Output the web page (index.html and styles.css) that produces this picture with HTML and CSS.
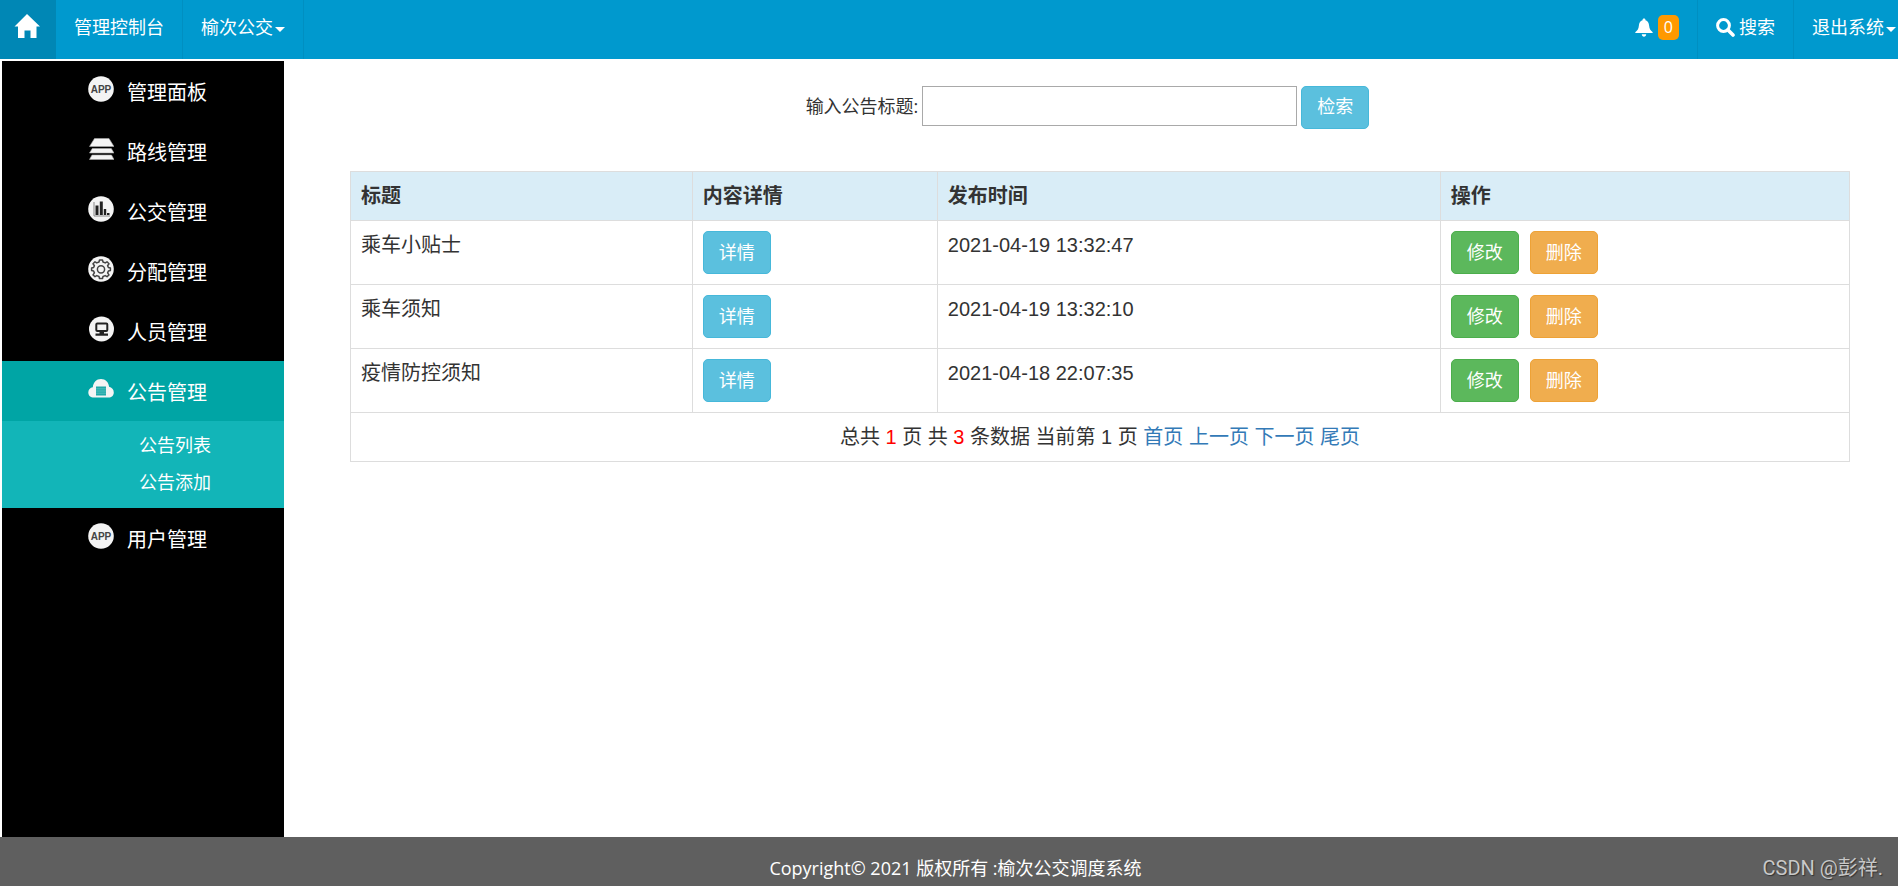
FILE: index.html
```html
<!DOCTYPE html>
<html lang="zh-CN">
<head>
<meta charset="utf-8">
<title>榆次公交调度系统</title>
<link rel="stylesheet" href="styles.css">
</head>
<body>
<header class="navbar">
  <nav class="nav-group">
    <a class="nav-home" href="#" aria-label="首页">
      <svg width="26" height="26" viewBox="0 0 26 26"><path fill="#fff" d="M13 1 26 13.600H22.500V25H16.500V17.500H10.500V25H4V13.600H0.500L13 1Z"/></svg>
    </a>
    <a class="nav-item nav-line" href="#">管理控制台</a>
    <a class="nav-item nav-line" href="#">榆次公交<span class="caret"></span></a>
  </nav>
  <nav class="nav-group">
    <a class="nav-item nav-line nav-bell" href="#" aria-label="通知">
      <svg width="18" height="20" viewBox="0 0 18 20"><path fill="#fff" d="M9 0.500c1 0 1.500.7 1.500 1.700 2.400.8 3.400 2.800 3.600 5.300.3 3.400 1.400 5 3.400 6.500.4.300.3 1-.3 1H.8c-.6 0-.7-.7-.3-1C2.500 12.500 3.600 10.900 3.900 7.500 4.100 5 5.100 3 7.500 2.200 7.500 1.200 8 .5 9 .5ZM6.800 16.300h4.400c0 1.500-1 2.500-2.200 2.500s-2.200-1-2.200-2.500Z"/></svg>
      <span class="badge">0</span>
    </a>
    <a class="nav-item nav-line" href="#">
      <svg class="search-icon" width="19" height="19" viewBox="0 0 19 19"><circle cx="7.500" cy="7.500" r="5.900" fill="none" stroke="#fff" stroke-width="3"/><path d="m12 12 5 5" stroke="#fff" stroke-width="3.600" stroke-linecap="round"/></svg>搜索</a>
    <a class="nav-item nav-last" href="#">退出系统<span class="caret"></span></a>
  </nav>
</header>

<div class="body">
  <aside class="sidebar">
    <a class="menu-item" href="#">
      <svg class="menu-icon" viewBox="0 0 26 26"><circle cx="13" cy="13" r="12.800" fill="#f4f4f4"/><text class="app-text" x="13" y="17" text-anchor="middle">APP</text></svg>
      管理面板</a>
    <a class="menu-item" href="#">
      <svg class="menu-icon" viewBox="0 0 26 26"><g fill="#f4f4f4" stroke="#aaa" stroke-width=".6"><path d="M6.500 2.500h14.500l5 8H1.500Z"/><path d="M4.300 12.500h19l2.700 4.500H1.500Z"/><path d="M4 19h19.500l2.500 4.500H1.500Z"/></g></svg>
      路线管理</a>
    <a class="menu-item" href="#">
      <svg class="menu-icon" viewBox="0 0 26 26"><circle cx="13" cy="13" r="12.800" fill="#f4f4f4"/><path d="M6 6v14h16" fill="none" stroke="#888" stroke-width="1"/><path fill="#222" d="M7.500 9.500h3V19h-3zM11.800 5.500h3V19h-3zM15.800 13h2.400v6h-2.400zM19 17h2.500v2H19z"/></svg>
      公交管理</a>
    <a class="menu-item" href="#">
      <svg class="menu-icon" viewBox="0 0 26 26"><circle cx="13" cy="13" r="12.800" fill="#f4f4f4"/><path fill="none" stroke="#444" stroke-width="1.500" stroke-linejoin="round" d="M11 6 11.500 4h3L15 6l2.200.9L19 5.800 21 7.700 19.600 9.700l.8 1.800 2 .5v2.600l-2 .5-.8 1.800 1.400 2L19 20.700l-1.800-1.100-2.200.9-.5 2h-3l-.5-2-2.200-.9L7 20.700 5 18.900l1.400-2-.8-1.800-2-.5V12l2-.5.800-1.800L5 7.700 7 5.800l1.800 1.100Z"/><circle cx="13" cy="13.300" r="3.600" fill="none" stroke="#444" stroke-width="1.500"/></svg>
      分配管理</a>
    <a class="menu-item" href="#">
      <svg class="menu-icon" viewBox="0 0 26 26"><circle cx="13.500" cy="13" r="12.500" fill="#f4f4f4"/><rect x="8.300" y="7.500" width="11" height="7.500" rx="1" fill="none" stroke="#222" stroke-width="2"/><path fill="#222" d="M11.500 15.500h4.500v2h4v2.200H7.500v-2.200h4z"/></svg>
      人员管理</a>
    <a class="menu-item active" href="#">
      <svg class="menu-icon" viewBox="0 0 26 26"><path fill="#f4f4f4" d="M6 21.500C2.500 21.500.3 19.300.3 16.400c0-2.700 1.900-4.700 4.500-5.100C5.200 6.500 8.500 3 13 3s7.600 3.200 8.100 7.800c2.700.4 4.700 2.800 4.700 5.600 0 2.900-2.300 5.100-5.300 5.100Z"/><path fill="#1fa9a9" d="M8 10.500h10v9H8z"/><path stroke="#69c6c6" stroke-width=".7" d="M8 12.800h10M8 15h10M8 17.200h10"/></svg>
      公告管理</a>
    <div class="submenu">
      <a class="submenu-item" href="#">公告列表</a>
      <a class="submenu-item" href="#">公告添加</a>
    </div>
    <a class="menu-item" href="#">
      <svg class="menu-icon" viewBox="0 0 26 26"><circle cx="13" cy="13" r="12.800" fill="#f4f4f4"/><text class="app-text" x="13" y="17" text-anchor="middle">APP</text></svg>
      用户管理</a>
  </aside>

  <main class="content">
    <form class="search">
      <label class="search-label" for="title">输入公告标题:</label>
      <input class="search-input" id="title" type="text">
      <button class="btn btn-info" type="button">检索</button>
    </form>
    <table class="table">
      <colgroup><col class="col-title"><col class="col-detail"><col class="col-time"><col></colgroup>
      <thead>
        <tr><th>标题</th><th>内容详情</th><th>发布时间</th><th>操作</th></tr>
      </thead>
      <tbody>
        <tr><td>乘车小贴士</td><td><button class="btn btn-info" type="button">详情</button></td><td>2021-04-19 13:32:47</td>
          <td><div class="actions"><button class="btn btn-success" type="button">修改</button><button class="btn btn-warning" type="button">删除</button></div></td></tr>
        <tr><td>乘车须知</td><td><button class="btn btn-info" type="button">详情</button></td><td>2021-04-19 13:32:10</td>
          <td><div class="actions"><button class="btn btn-success" type="button">修改</button><button class="btn btn-warning" type="button">删除</button></div></td></tr>
        <tr><td>疫情防控须知</td><td><button class="btn btn-info" type="button">详情</button></td><td>2021-04-18 22:07:35</td>
          <td><div class="actions"><button class="btn btn-success" type="button">修改</button><button class="btn btn-warning" type="button">删除</button></div></td></tr>
        <tr><td class="pager" colspan="4">总共 <span class="count">1</span> 页 共 <span class="count">3</span> 条数据 当前第 1 页 <a href="#">首页</a> <a href="#">上一页</a> <a href="#">下一页</a> <a href="#">尾页</a></td></tr>
      </tbody>
    </table>
  </main>
</div>

<footer class="footer">
  <span class="copyright">Copyright© 2021 版权所有 :榆次公交调度系统</span>
  <span class="watermark">CSDN @彭祥.</span>
</footer>
</body>
</html>
```
FILE: styles.css
```css
* { box-sizing: border-box; }

body {
  margin: 0;
  min-height: 100vh;
  display: flex;
  flex-direction: column;
  background: #fff;
  color: #333;
  font: 18px/25px "Open Sans", "Noto Sans CJK SC", sans-serif;
}

a { text-decoration: none; }

.navbar {
  display: flex;
  justify-content: space-between;
  background: #0099ce;
}

.nav-group { display: flex; }

.nav-home {
  display: flex;
  align-items: center;
  width: 56px;
  padding: 0 0 8px 14px;
  background: #0087b5;
}

.nav-item {
  display: flex;
  align-items: center;
  padding: 15px 18px 19px;
  color: #fff;
}

.nav-line { border-right: 1px solid #008fc1; }
.nav-bell { gap: 5px; }
.nav-last { padding-right: 2px; }
.search-icon { margin-right: 4px; }

.caret {
  margin: 4px 0 0 2px;
  border: 5px solid transparent;
  border-top-color: #fff;
  border-bottom: 0;
}

.badge {
  padding: 0 6px;
  border-radius: 5px;
  background: #f90;
  font-size: 16px;
}

.body {
  flex: 1;
  display: flex;
  padding: 2px 0 0 2px;
}

.sidebar {
  width: 282px;
  background: #000;
}

.menu-item {
  display: flex;
  align-items: center;
  gap: 13px;
  height: 60px;
  padding: 2px 0 0 86px;
  color: #fff;
  font-size: 20px;
}

.menu-item.active { background: #00a5a5; }

.menu-icon {
  width: 26px;
  height: 26px;
  margin-bottom: 6px;
}

.app-text {
  fill: #444;
  font: bold 10px "Liberation Sans", sans-serif;
}

.submenu {
  padding: 6px 0 7px;
  background: #12b5b8;
}

.submenu-item {
  display: block;
  padding-left: 137px;
  color: #fff;
  line-height: 37px;
}

.content {
  flex: 1;
  padding: 25px 48px 0 66px;
}

.search {
  display: flex;
  justify-content: center;
  gap: 4px;
  margin-bottom: 42px;
  padding-right: 25px;
}

.search-label { line-height: 40px; }

.search-input {
  width: 375px;
  height: 40px;
  border: 1px solid #a9a9a9;
  padding: 0 8px;
  font: inherit;
}

.btn {
  display: block;
  height: 43px;
  padding: 0 15px 2px;
  border: 1px solid;
  border-radius: 5px;
  color: #fff;
  font: inherit;
}

.btn-info { background: #5bc0de; border-color: #46b8da; }
.btn-success { background: #5cb85c; border-color: #4cae4c; }
.btn-warning { background: #f0ad4e; border-color: #eea236; }

.table {
  width: 100%;
  table-layout: fixed;
  border-collapse: collapse;
  font: 20px/28px "Liberation Sans", "Noto Sans CJK SC", sans-serif;
}

.table .btn { font: 18px/25px "Noto Sans CJK SC", sans-serif; }

.col-title { width: 22.8%; }
.col-detail { width: 16.35%; }
.col-time { width: 33.55%; }

.table th,
.table td {
  padding: 10px;
  border: 1px solid #ddd;
  text-align: left;
  vertical-align: top;
}

.table th { background: #d9edf7; }

.actions {
  display: flex;
  gap: 11px;
}

.table .pager { text-align: center; }
.pager a { color: #337ab7; }
.count { color: #f00; }

.footer {
  display: grid;
  grid-template-columns: 1fr auto 1fr;
  align-items: center;
  padding: 17px 15px 4px 28px;
  background: #5f5f5f;
  color: #fff;
  line-height: 28px;
}

.copyright { grid-column: 2; }

.watermark {
  justify-self: end;
  color: #c8c8c8;
  font: 20px/28px Roboto, "Noto Sans CJK SC", sans-serif;
  text-shadow: 1px 1px 1px #333;
}
```
